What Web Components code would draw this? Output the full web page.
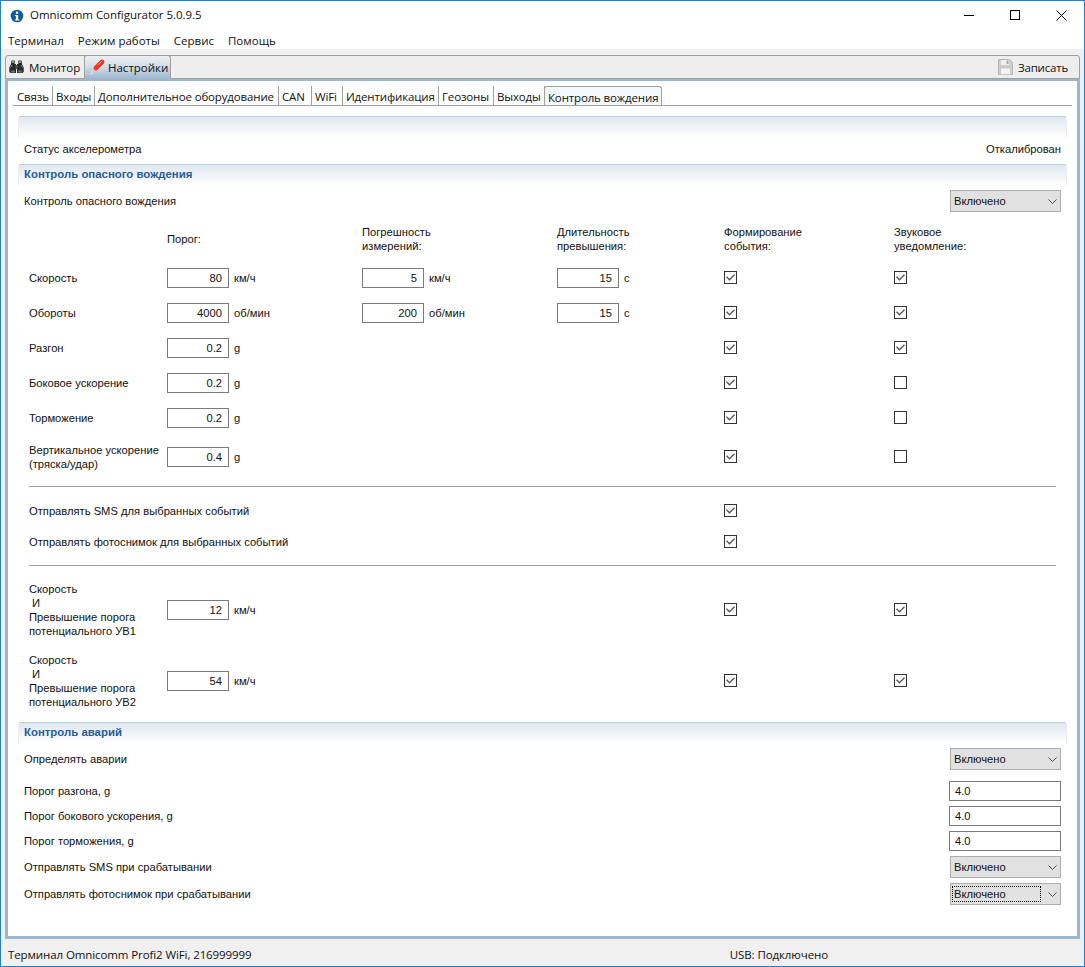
<!DOCTYPE html>
<html lang="ru"><head><meta charset="utf-8"><title>Omnicomm Configurator</title>
<style>
html,body{margin:0;padding:0;height:967px;overflow:hidden;background:#fff}
</style></head><body>
<script>
const ui='"Open Sans","Noto Sans","Liberation Sans",sans-serif';
const ar='"Liberation Sans",Arial,sans-serif';
function def(name,css,html){
  customElements.define(name,class extends HTMLElement{
    connectedCallback(){
      if(this.shadowRoot)return;
      const s=this.attachShadow({mode:'open'});
      const h=typeof html==='function'?html(this):html;
      s.innerHTML='<style>'+css+'</style>'+h;
    }
  });
}
const a=(e,n,d='')=>e.getAttribute(n)??d;
const nl=s=>s.replace(/\\n/g,'\n');

def('app-window',`:host{display:flex;flex-direction:column;box-sizing:border-box;width:1085px;height:967px;border:1px solid #1a83d8;background:#f0f0f0;color:#000}`,`<slot></slot>`);

def('title-bar',`:host{display:flex;align-items:center;height:29px;background:#fff;font:11.5px ${ui};color:#111;flex:none}
.i{margin-left:9px;width:14px;height:14px;margin-right:6px;flex:none}
.t{flex:1;letter-spacing:-.04px;margin-bottom:2px}
.b{width:46px;height:29px;display:flex;align-items:center;justify-content:center}
svg{display:block}`,`
<svg class="i" viewBox="0 0 14 14"><circle cx="7" cy="7" r="6.3" fill="#0f5a9e"/><rect x="5.900" y="2.600" width="2.300" height="2.200" fill="#fff"/><path d="M4.900 5.900h3.300v4.500h1v1.100H4.900v-1.100h1V7H4.900z" fill="#fff"/></svg>
<span class="t"><slot></slot></span>
<span class="b"><svg width="11" height="11" viewBox="0 0 11 11"><path d="M0 5.500h10" stroke="#000" fill="none"/></svg></span>
<span class="b"><svg width="11" height="11" viewBox="0 0 11 11"><rect x=".5" y=".5" width="9" height="9" stroke="#000" fill="none"/></svg></span>
<span class="b"><svg width="11" height="11" viewBox="0 0 11 11"><path d="M.5.5l10 10M10.500.5l-10 10" stroke="#000" fill="none"/></svg></span>`);

def('menu-bar',`:host{display:flex;box-sizing:border-box;height:19px;padding-top:2px;align-items:center;gap:14px;padding-left:7px;background:#fff;font:11.5px ${ui};color:#111;flex:none}`,`<slot></slot>`);

def('main-toolbar',`:host{display:flex;align-items:flex-end;box-sizing:border-box;height:24px;margin:6px 4px 0 4px;flex:none;border:1px solid #a0a0a0;border-radius:3px 3px 0 0;background:#eee;font:11.5px ${ui};color:#111;position:relative}
.save{margin-left:auto;display:flex;align-items:center;gap:5px;height:22px;padding-right:11px;letter-spacing:-.2px}
svg{display:block}`,`<slot></slot><span class="save"><svg width="15" height="16" viewBox="0 0 15 16"><path d="M.5.5h11l3 3v12H.5z" fill="#cfcfcf" stroke="#b5b5b5"/><rect x="3" y="1" width="8" height="5" fill="#efefef"/><rect x="8.500" y="1.500" width="2" height="3.500" fill="#a8a8a8"/><rect x="2.500" y="9" width="10" height="6.500" fill="#f4f4f4" stroke="#c0c0c0" stroke-width=".6"/></svg><slot name="save"></slot></span>`);

def('main-tab',`:host{display:flex;align-items:center;box-sizing:border-box;height:22px;width:79px;padding:0 0 0 3px;gap:5px;border-right:1px solid #a0a0a0}
:host([active]){background:linear-gradient(#eef0f3,#d3deea 45%,#9db6d0);width:87px;padding:0 0 0 2px;gap:3px;height:24px;margin-bottom:-1px;border:1px solid #a0a0a0;border-bottom:none;border-radius:3px 3px 0 0;margin-left:-1px}
svg{display:block}`,`<slot name="icon"></slot><slot></slot>`);

def('main-panel',`:host{display:block;box-sizing:border-box;flex:none;height:860px;margin:0 4px;border:3px solid #9db6d0;border-top:none;background:#fff}
.line{height:2px;background:#9db6d0}
.in{padding:0 5px;font:11.2px ${ar};color:#111}`,`<div class="line"></div><div class="in"><slot></slot></div>`);

def('sub-tabs',`:host{display:flex;align-items:flex-end;box-sizing:border-box;height:25px;border-bottom:1px solid #a0a0a0;margin-bottom:10px;font:11.5px ${ui};color:#111;letter-spacing:-.15px}`,`<slot></slot>`);
def('sub-tab',`:host{display:flex;align-items:center;box-sizing:border-box;height:19px;padding:2px 0 0 3px;border-right:1px solid #a0a0a0;white-space:nowrap}
:host([active]){background:#f5f9fe;border:1px solid #a0a0a0;border-bottom:none;border-radius:3px 3px 0 0;margin-left:-1px;padding-left:3px}`,`<slot></slot>`);

def('form-body',`:host{display:block;padding:0 5px}`,`<slot></slot>`);

def('section-band',`:host{display:flex;align-items:flex-start;box-sizing:border-box;height:22px;padding:2px 5px 0;border:1px solid;border-bottom:none;border-color:#b6cde0 #e8eef4;border-radius:3px 3px 0 0;background:linear-gradient(#dfe6ef,#fff);background-origin:border-box;font:bold 11.4px/14px ${ar};color:#245d9c}`,`<slot></slot>`);

def('kv-row',`:host{display:flex;align-items:center;justify-content:space-between;box-sizing:border-box;height:var(--h,26px);padding:var(--pt,0) 6px var(--pb,0);line-height:14px}`,`<slot></slot>`);

def('drop-down',`:host{display:flex;align-items:center;box-sizing:border-box;width:111px;height:22px;background:#e1e1e1;border:1px solid #adadad;position:relative;color:#111}
svg{position:absolute;right:3px;top:8px;display:block}
.f{flex:none;width:89px;height:16px;line-height:17px;box-sizing:border-box;margin-left:1px;padding-left:2px}
:host([focus]) .f{outline:1px dotted #000;outline-offset:-1px}`,
`<span class="f"><slot></slot></span><svg width="9" height="5" viewBox="0 0 9 5"><path d="M.5.500l4 4 4-4" fill="none" stroke="#505050"/></svg>`);

def('text-box',`:host{display:block;box-sizing:border-box;width:112px;height:20px;background:#fff;border:1px solid #7a7a7a;padding-left:5px;line-height:18px;color:#111}`,`<slot></slot>`);

def('num-field',`:host{display:flex;align-items:center;gap:5px;line-height:14px}
.b{display:block;box-sizing:border-box;width:62px;height:20px;border:1px solid #7a7a7a;background:#fff;text-align:right;padding-right:6px;line-height:18px}`,
h=>`<span class="b">${a(h,'value')}</span><span>${a(h,'unit')}</span>`);

def('check-box',`:host{display:block;width:13px;height:13px;margin-top:var(--cb,0)}svg{display:block}`,
h=>`<svg width="13" height="13" viewBox="0 0 13 13"><rect x=".5" y=".5" width="12" height="12" fill="#fff" stroke="#333"/>${h.hasAttribute('checked')?'<path d="M2.500 5.800l3 3 5-5" fill="none" stroke="#555" stroke-width="1.300"/>':''}</svg>`);

def('drive-grid',`:host{display:grid;grid-template-columns:138px 195px 195px 167px 170px 1fr;padding-left:11px;line-height:14px}`,`<slot></slot>`);

def('drive-head',`:host{display:grid;grid-column:1/-1;grid-template-columns:subgrid;align-items:center;box-sizing:border-box;height:44px;padding-top:2px}
span{white-space:pre}`,
h=>`<span></span><span>${nl(a(h,'p'))}</span><span>${nl(a(h,'e'))}</span><span>${nl(a(h,'d'))}</span><span>${nl(a(h,'ev'))}</span><span>${nl(a(h,'snd'))}</span>`);

def('drive-row',`:host{display:grid;grid-column:1/-1;grid-template-columns:subgrid;align-items:center;height:var(--h,35px)}
.l{white-space:pre}`,
h=>{
  const f=n=>{const v=a(h,n);if(!v)return '<span></span>';const[p,q]=v.split('|');return `<num-field value="${p}" unit="${q}"></num-field>`};
  const c=n=>{const v=a(h,n);if(!v)return '<span></span>';return `<check-box ${v==='1'?'checked':''}></check-box>`};
  return `<span class="l">${nl(a(h,'label'))}</span>${f('p')}${f('e')}${f('d')}${c('ev')}${c('snd')}`;
});

def('h-rule',`:host{display:block;height:1px;background:#a0a0a0;margin:var(--m,0) 11px 0}`,``);
def('status-bar',`:host{display:flex;flex:1;align-items:center;box-sizing:border-box;padding:4px 0 0 7px;font:11.5px ${ui};color:#111;letter-spacing:-.1px}
.u{margin-left:auto;margin-right:256px}`,`<slot></slot><span class="u"><slot name="r"></slot></span>`);
</script>

<app-window>
  <title-bar>Omnicomm Configurator 5.0.9.5</title-bar>
  <menu-bar><span>Терминал</span><span>Режим работы</span><span>Сервис</span><span>Помощь</span></menu-bar>
  <main-toolbar>
    <main-tab><svg slot="icon" width="15" height="14" viewBox="0 0 15 14"><path d="M2.500.5h3.200V4H7v9H1.800L.3 12V7.500L2 4z" fill="#2a2a2a"/><path d="M12.500.5H9.300V4H8v9h5.200l1.500-1V7.500L13 4z" fill="#2a2a2a"/><rect x="6.500" y="5" width="2" height="4" fill="#555"/><rect x="3" y="1.200" width="2" height="1.600" fill="#a8a8a8"/><rect x="10" y="1.200" width="2" height="1.600" fill="#a8a8a8"/><path d="M1.500 7.500L3 5" stroke="#8a8a8a" fill="none"/><path d="M13.500 7.500L12 5" stroke="#8a8a8a" fill="none"/><ellipse cx="4" cy="11.500" rx="2" ry="1.200" fill="#6d6d6d"/><ellipse cx="11" cy="11.500" rx="2" ry="1.200" fill="#6d6d6d"/></svg>Монитор</main-tab>
    <main-tab active><svg slot="icon" width="18" height="18" viewBox="0 0 18 18"><path d="M4 14.500L9.500 9" stroke="#c4ceda" stroke-width="3" fill="none"/><path d="M.6 12.400L2.800 14.600 4.600 12.800 2.600 10.600C4 9.800 5.800 10.200 6.600 11.400 7.400 12.800 7 14.800 5.600 15.700 4 16.600 1.200 15.600.6 12.400z" fill="#d5dce5" stroke="#aeb9c7" stroke-width=".5"/><path d="M9 9L15 3" stroke="#e8361f" stroke-width="4.600" stroke-linecap="round" fill="none"/><path d="M11 5.800L14.800 2.400" stroke="#ff9c8a" stroke-width="1" stroke-linecap="round" fill="none"/></svg>Настройки</main-tab>
    <span slot="save">Записать</span>
  </main-toolbar>
  <main-panel>
    <sub-tabs>
      <sub-tab style="width:40px;padding-left:4px">Связь</sub-tab><sub-tab style="width:42px">Входы</sub-tab><sub-tab style="width:184px">Дополнительное оборудование</sub-tab><sub-tab style="width:33px">CAN</sub-tab><sub-tab style="width:31px">WiFi</sub-tab><sub-tab style="width:96px">Идентификация</sub-tab><sub-tab style="width:55px">Геозоны</sub-tab><sub-tab style="width:51px">Выходы</sub-tab><sub-tab active style="width:118px">Контроль вождения</sub-tab>
    </sub-tabs>
    <form-body>
      <section-band></section-band>
      <kv-row style="--h:26px;--pb:4px"><span>Статус акселерометра</span><span>Откалиброван</span></kv-row>
      <section-band>Контроль опасного вождения</section-band>
      <kv-row style="--h:30px"><span>Контроль опасного вождения</span><drop-down>Включено</drop-down></kv-row>
      <drive-grid>
        <drive-head p="Порог:" e="Погрешность\nизмерений:" d="Длительность\nпревышения:" ev="Формирование\nсобытия:" snd="Звуковое\nуведомление:"></drive-head>
        <drive-row label="Скорость" p="80|км/ч" e="5|км/ч" d="15|с" ev="1" snd="1"></drive-row>
        <drive-row label="Обороты" p="4000|об/мин" e="200|об/мин" d="15|с" ev="1" snd="1"></drive-row>
        <drive-row label="Разгон" p="0.2|g" ev="1" snd="1"></drive-row>
        <drive-row label="Боковое ускорение" p="0.2|g" ev="1" snd="0"></drive-row>
        <drive-row label="Торможение" p="0.2|g" ev="1" snd="0"></drive-row>
        <drive-row style="--h:44px;--cb:-2px" label="Вертикальное ускорение\n(тряска/удар)" p="0.4|g" ev="1" snd="0"></drive-row>
      </drive-grid>
      <h-rule style="--m:7px"></h-rule>
      <drive-grid style="margin-top:8px">
        <drive-row style="--h:31px" label="Отправлять SMS для выбранных событий" ev="1"></drive-row>
        <drive-row style="--h:31px" label="Отправлять фотоснимок для выбранных событий" ev="1"></drive-row>
      </drive-grid>
      <h-rule style="--m:8px"></h-rule>
      <drive-grid style="margin-top:9px">
        <drive-row style="--h:70px;--cb:-2px" label="Скорость\n И\nПревышение порога\nпотенциального УВ1" p="12|км/ч" ev="1" snd="1"></drive-row>
        <drive-row style="--h:72px;--cb:-2px" label="Скорость\n И\nПревышение порога\nпотенциального УВ2" p="54|км/ч" ev="1" snd="1"></drive-row>
      </drive-grid>
      <section-band style="margin-top:5px">Контроль аварий</section-band>
      <kv-row style="--h:30px"><span>Определять аварии</span><drop-down>Включено</drop-down></kv-row>
      <kv-row style="--h:25px;--pb:1px;margin-top:5px"><span>Порог разгона, g</span><text-box>4.0</text-box></kv-row>
      <kv-row style="--h:25px;--pb:1px"><span>Порог бокового ускорения, g</span><text-box>4.0</text-box></kv-row>
      <kv-row style="--h:25px;--pb:1px"><span>Порог торможения, g</span><text-box>4.0</text-box></kv-row>
      <kv-row style="--h:26px"><span>Отправлять SMS при срабатывании</span><drop-down>Включено</drop-down></kv-row>
      <kv-row style="--h:27px;--pt:1px"><span>Отправлять фотоснимок при срабатывании</span><drop-down focus>Включено</drop-down></kv-row>
    </form-body>
  </main-panel>
  <status-bar>Терминал Omnicomm Profi2 WiFi, 216999999<span slot="r">USB: Подключено</span></status-bar>
</app-window>
</body></html>
